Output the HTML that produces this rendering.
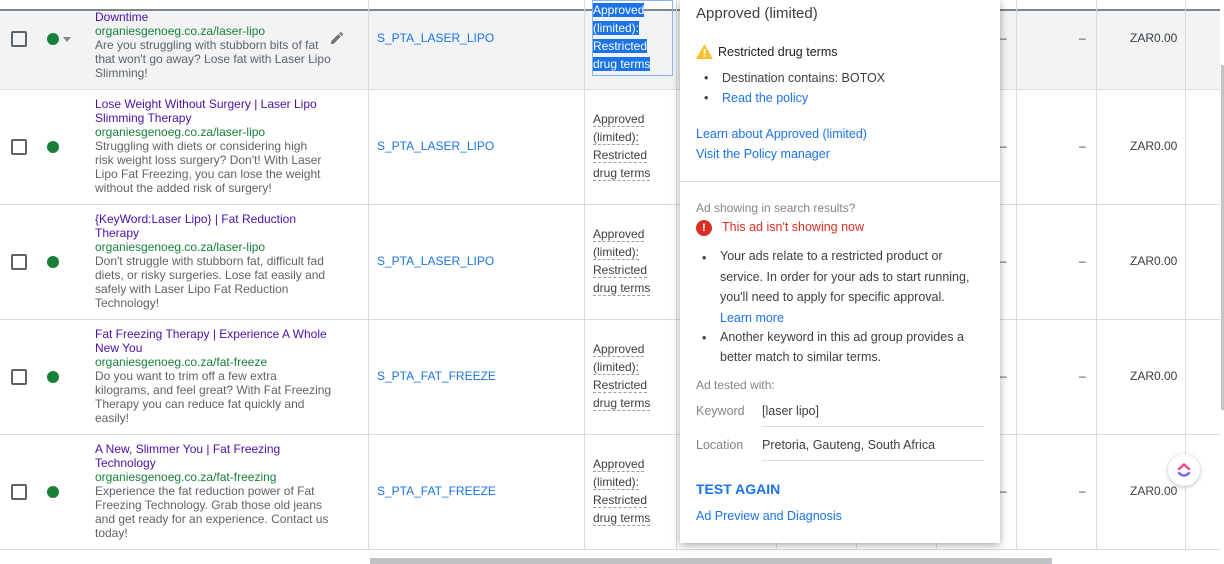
<!DOCTYPE html>
<html><head><meta charset="utf-8"><style>
*{margin:0;padding:0;box-sizing:border-box}
body{width:1224px;height:564px;overflow:hidden;background:#fff;font-family:"Liberation Sans",Arial,sans-serif;position:relative;color:#3c4043}
.a{position:absolute}
.hl{position:absolute;left:0;width:1220px;height:1px;background:#dadce0}
.vl{position:absolute;top:0;width:1px;height:550px;background:#dadce0}
.cb{position:absolute;left:11px;width:16px;height:16px;border:2px solid #5f6368;border-radius:2px}
.dot{position:absolute;left:47px;width:12px;height:12px;border-radius:50%;background:#188038}
.ad{position:absolute;left:95px;white-space:nowrap;font-size:12px;line-height:14px;color:#5f6368}
.ad .h{color:#4b0fa8}.ad .u{color:#188038}
.grp{position:absolute;left:377px;font-size:12px;color:#1a73e8}
.st{position:absolute;left:593px;font-size:12px;line-height:18px;color:#3c4043}
.st span{border-bottom:1px dashed #9aa0a6}
.dash{position:absolute;font-size:12px;color:#3c4043}
.zar{position:absolute;left:1130px;font-size:12px;color:#3c4043}
.pop{position:absolute;left:680px;top:0;width:320px;height:543px;background:#fff;box-shadow:0 2px 8px rgba(0,0,0,.35)}
.pop .a{font-size:12.5px}
.lk{color:#1a73e8}
</style></head><body>
<div class="a" style="left:0;top:10px;width:1220px;height:79px;background:#f1f3f4"></div>
<div class="a" style="left:0;top:9px;width:1220px;height:2px;background:#80868b"></div>
<div class="hl" style="top:89px"></div><div class="hl" style="top:204px"></div><div class="hl" style="top:319px"></div><div class="hl" style="top:434px"></div><div class="hl" style="top:549px"></div>
<div class="vl" style="left:368px"></div><div class="vl" style="left:584px"></div><div class="vl" style="left:676px"></div>
<div class="vl" style="left:776px"></div><div class="vl" style="left:856px"></div><div class="vl" style="left:936px"></div><div class="vl" style="left:1016px"></div><div class="vl" style="left:1096px"></div><div class="vl" style="left:1185px"></div>

<div class="cb" style="top:31px"></div><div class="dot" style="top:33px"></div>
<div class="a" style="left:63px;top:37px;border:4px solid transparent;border-top:5px solid #80868b"></div>
<svg class="a" style="left:329px;top:30px" width="16" height="16" viewBox="0 0 24 24"><path fill="#757575" d="M3 17.25V21h3.75L17.81 9.940l-3.75-3.75L3 17.25zM20.71 7.04a1 1 0 000-1.41l-2.34-2.34a1 1 0 00-1.41 0l-1.83 1.83 3.75 3.75 1.83-1.83z"/></svg>
<div class="ad" style="top:10px"><div class="h">Downtime</div><div class="u">organiesgenoeg.co.za/laser-lipo</div>Are you struggling with stubborn bits of fat<br>that won't go away? Lose fat with Laser Lipo<br>Slimming!</div>
<div class="grp" style="top:31px">S_PTA_LASER_LIPO</div>
<div class="a" style="left:592px;top:0;width:81px;height:76px;border:1px solid #8ab4f8"></div>
<div class="st" style="top:1px;color:#fff"><span style="background:#1a73e8;border:0">Approved</span><br><span style="background:#1a73e8;border:0">(limited):</span><br><span style="background:#1a73e8;border:0">Restricted</span><br><span style="background:#1a73e8;border:0">drug terms</span></div>

<div class="cb" style="top:139px"></div><div class="dot" style="top:141px"></div>
<div class="ad" style="top:97px"><div class="h">Lose Weight Without Surgery | Laser Lipo<br>Slimming Therapy</div><div class="u">organiesgenoeg.co.za/laser-lipo</div>Struggling with diets or considering high<br>risk weight loss surgery? Don't! With Laser<br>Lipo Fat Freezing, you can lose the weight<br>without the added risk of surgery!</div>
<div class="grp" style="top:139px">S_PTA_LASER_LIPO</div>
<div class="st" style="top:110px"><span>Approved</span><br><span>(limited):</span><br><span>Restricted</span><br><span>drug terms</span></div>

<div class="cb" style="top:254px"></div><div class="dot" style="top:256px"></div>
<div class="ad" style="top:212px"><div class="h">{KeyWord:Laser Lipo} | Fat Reduction<br>Therapy</div><div class="u">organiesgenoeg.co.za/laser-lipo</div>Don't struggle with stubborn fat, difficult fad<br>diets, or risky surgeries. Lose fat easily and<br>safely with Laser Lipo Fat Reduction<br>Technology!</div>
<div class="grp" style="top:254px">S_PTA_LASER_LIPO</div>
<div class="st" style="top:225px"><span>Approved</span><br><span>(limited):</span><br><span>Restricted</span><br><span>drug terms</span></div>

<div class="cb" style="top:369px"></div><div class="dot" style="top:371px"></div>
<div class="ad" style="top:327px"><div class="h">Fat Freezing Therapy | Experience A Whole<br>New You</div><div class="u">organiesgenoeg.co.za/fat-freeze</div>Do you want to trim off a few extra<br>kilograms, and feel great? With Fat Freezing<br>Therapy you can reduce fat quickly and<br>easily!</div>
<div class="grp" style="top:369px">S_PTA_FAT_FREEZE</div>
<div class="st" style="top:340px"><span>Approved</span><br><span>(limited):</span><br><span>Restricted</span><br><span>drug terms</span></div>

<div class="cb" style="top:484px"></div><div class="dot" style="top:486px"></div>
<div class="ad" style="top:442px"><div class="h">A New, Slimmer You | Fat Freezing<br>Technology</div><div class="u">organiesgenoeg.co.za/fat-freezing</div>Experience the fat reduction power of Fat<br>Freezing Technology. Grab those old jeans<br>and get ready for an experience. Contact us<br>today!</div>
<div class="grp" style="top:484px">S_PTA_FAT_FREEZE</div>
<div class="st" style="top:455px"><span>Approved</span><br><span>(limited):</span><br><span>Restricted</span><br><span>drug terms</span></div>

<div class="dash" style="left:1000px;top:31px">–</div><div class="dash" style="left:1079px;top:31px">–</div><div class="zar" style="top:31px">ZAR0.00</div>
<div class="dash" style="left:1000px;top:139px">–</div><div class="dash" style="left:1079px;top:139px">–</div><div class="zar" style="top:139px">ZAR0.00</div>
<div class="dash" style="left:1000px;top:254px">–</div><div class="dash" style="left:1079px;top:254px">–</div><div class="zar" style="top:254px">ZAR0.00</div>
<div class="dash" style="left:1000px;top:369px">–</div><div class="dash" style="left:1079px;top:369px">–</div><div class="zar" style="top:369px">ZAR0.00</div>
<div class="dash" style="left:1000px;top:484px">–</div><div class="dash" style="left:1079px;top:484px">–</div><div class="zar" style="top:484px">ZAR0.00</div>

<div class="a" style="left:1221px;top:65px;width:3px;height:345px;background:#c4c4c4"></div>
<div class="a" style="left:370px;top:558px;width:682px;height:6px;background:#bdc1c6"></div>
<div class="a" style="left:1168px;top:454px;width:32px;height:32px;border-radius:50%;background:#fff;box-shadow:0 1px 4px rgba(0,0,0,.25)">
<svg style="position:absolute;left:8px;top:7px" width="16" height="18" viewBox="0 0 16 18"><path d="M3 8 L8 3.5 L13 8" stroke="#fc3e8a" stroke-width="2.4" fill="none" stroke-linecap="round"/><path d="M3 12 Q8 17 13 12" stroke="#7b68ee" stroke-width="2.4" fill="none" stroke-linecap="round"/></svg></div>

<div class="pop">
<div class="a" style="left:16px;top:5px;font-size:15px;color:#3c4043">Approved (limited)</div>
<svg class="a" style="left:16px;top:44px" width="17" height="15" viewBox="0 0 17 15"><path d="M8.5 0 L17 15 H0 Z" fill="#fbc02d"/><rect x="7.7" y="5" width="1.6" height="5" fill="#fff"/><rect x="7.7" y="11" width="1.6" height="1.6" fill="#fff"/></svg>
<div class="a" style="left:38px;top:45px;color:#202124">Restricted drug terms</div>
<div class="a" style="left:24px;top:71px">•</div><div class="a" style="left:42px;top:71px">Destination contains: BOTOX</div>
<div class="a" style="left:24px;top:91px">•</div><div class="a lk" style="left:42px;top:91px">Read the policy</div>
<div class="a lk" style="left:16px;top:127px">Learn about Approved (limited)</div>
<div class="a lk" style="left:16px;top:147px">Visit the Policy manager</div>
<div class="a" style="left:0;top:181px;width:320px;height:1px;background:#dadce0"></div>
<div class="a" style="left:16px;top:201px;font-size:12px!important;color:#80868b">Ad showing in search results?</div>
<div class="a" style="left:16px;top:220px;width:16px;height:16px;border-radius:50%;background:#d93025;color:#fff;font-size:11px!important;font-weight:bold;text-align:center;line-height:16px">!</div>
<div class="a" style="left:42px;top:220px;color:#d93025">This ad isn't showing now</div>
<div class="a" style="left:22px;top:251px">•</div>
<div class="a" style="left:40px;top:246px;width:262px;line-height:20.5px">Your ads relate to a restricted product or service. In order for your ads to start running, you'll need to apply for specific approval.<br><span class="lk">Learn more</span></div>
<div class="a" style="left:22px;top:331px">•</div>
<div class="a" style="left:40px;top:327px;width:275px;line-height:20px">Another keyword in this ad group provides a better match to similar terms.</div>
<div class="a" style="left:16px;top:378px;font-size:12px!important;color:#80868b">Ad tested with:</div>
<div class="a" style="left:16px;top:404px;color:#80868b">Keyword</div><div class="a" style="left:82px;top:404px">[laser lipo]</div>
<div class="a" style="left:82px;top:426px;width:222px;height:1px;background:#dadce0"></div>
<div class="a" style="left:16px;top:438px;color:#80868b">Location</div><div class="a" style="left:82px;top:438px">Pretoria, Gauteng, South Africa</div>
<div class="a" style="left:82px;top:460px;width:222px;height:1px;background:#dadce0"></div>
<div class="a lk" style="left:16px;top:481px;font-size:14px!important;font-weight:bold">TEST AGAIN</div>
<div class="a lk" style="left:16px;top:509px">Ad Preview and Diagnosis</div>
</div>
</body></html>
